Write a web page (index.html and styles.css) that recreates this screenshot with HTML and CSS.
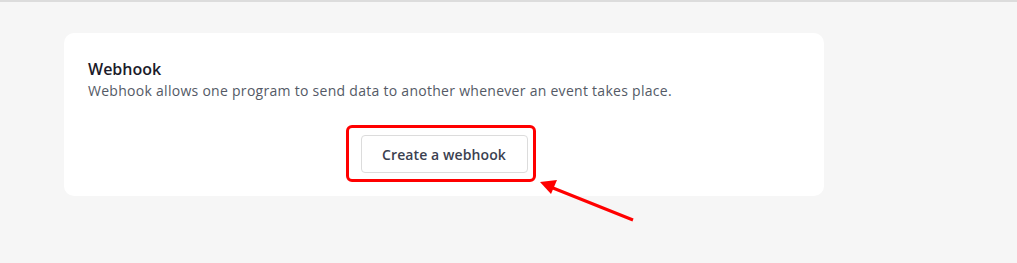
FILE: index.html
```html
<!DOCTYPE html>
<html>
<head>
<meta charset="utf-8">
<link rel="stylesheet" href="styles.css">
</head>
<body>
<div class="page">
  <div class="card">
    <h2 class="title">Webhook</h2>
    <p class="desc">Webhook allows one program to send data to another whenever an event takes place.</p>
    <div class="actions">
      <button class="btn">Create a webhook</button>
    </div>
  </div>
  <div class="highlight"></div>
  <svg class="arrow" width="1017" height="263" viewBox="0 0 1017 263">
    <line x1="633" y1="220" x2="548" y2="186" stroke="#f00" stroke-width="3"/>
    <polygon points="540,182 557,180 551,194" fill="#f00"/>
  </svg>
</div>
</body>
</html>
```
FILE: styles.css
```css
* { box-sizing: border-box; }
html, body { margin: 0; padding: 0; }
body {
  background: #f6f6f6;
  font-family: "Open Sans", sans-serif;
  width: 1017px;
  height: 263px;
  overflow: hidden;
}
.page {
  position: relative;
  border-top: 2px solid #dcdcdc;
  padding: 31px 0 0 64px;
  height: 263px;
}
.card {
  width: 760px;
  height: 163px;
  background: #fff;
  border-radius: 10px;
  padding: 26px 24px 0;
}
.title {
  margin: 0;
  font-size: 16px;
  font-weight: 600;
  color: #1b1b2a;
  line-height: 20px;
}
.desc {
  margin: 3px 0 0;
  font-size: 14px;
  letter-spacing: 0.28px;
  color: #545a66;
  line-height: 18px;
}
.actions {
  display: flex;
  justify-content: center;
  margin-top: 35px;
}
.btn {
  width: 167px;
  height: 38px;
  background: #fff;
  border: 1px solid #dcdcdc;
  border-radius: 4px;
  font-family: inherit;
  font-size: 14px;
  font-weight: 600;
  letter-spacing: 0.1px;
  color: #3b4150;
  padding: 0;
}
.highlight {
  position: absolute;
  left: 346px;
  top: 123px;
  width: 190px;
  height: 57px;
  border: 3px solid #f00;
  border-radius: 6px;
}
.arrow {
  position: absolute;
  left: 0;
  top: -2px;
}
```
